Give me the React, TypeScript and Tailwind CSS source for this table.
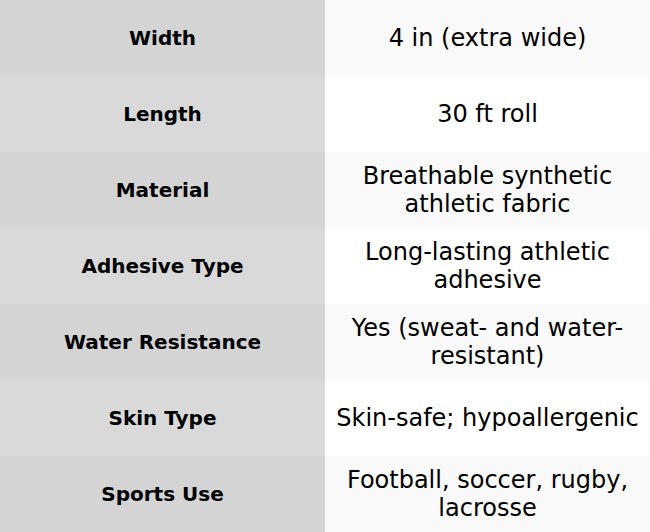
const rows: [string, string][] = [
  ['Width', '4 in (extra wide)'],
  ['Length', '30 ft roll'],
  ['Material', 'Breathable synthetic athletic fabric'],
  ['Adhesive Type', 'Long-lasting athletic adhesive'],
  ['Water Resistance', 'Yes (sweat- and water-resistant)'],
  ['Skin Type', 'Skin-safe; hypoallergenic'],
  ['Sports Use', 'Football, soccer, rugby, lacrosse'],
];

export default function App() {
  return (
    <div className="w-[650px] font-['DejaVu_Sans',sans-serif] text-black">
      {rows.map(([label, value], i) => (
        <div
          key={label}
          className={`grid h-[76px] grid-cols-2 ${i % 2 === 0 ? 'bg-[#f9f9f9]' : 'bg-white'}`}
        >
          <div
            className={`flex items-center justify-center px-2 text-center text-[20px] font-bold leading-[28px] ${
              i % 2 === 0 ? 'bg-[#d4d4d4]' : 'bg-[#d9d9d9]'
            }`}
          >
            {label}
          </div>
          <div className="flex items-center justify-center px-2 text-center text-[24px] leading-[28px]">
            {value}
          </div>
        </div>
      ))}
    </div>
  );
}
